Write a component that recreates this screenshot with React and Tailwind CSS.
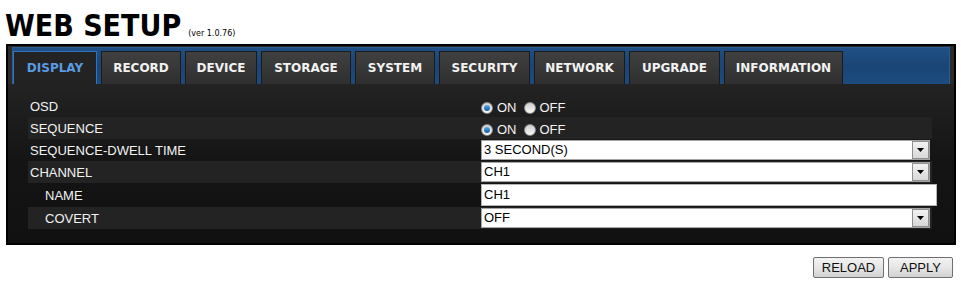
import React from "react";

const tabs = [
  ["DISPLAY", "w-[84px]"],
  ["RECORD", "w-[80px]"],
  ["DEVICE", "w-[72px]"],
  ["STORAGE", "w-[90px]"],
  ["SYSTEM", "w-[80px]"],
  ["SECURITY", "w-[91px]"],
  ["NETWORK", "w-[91px]"],
  ["UPGRADE", "w-[91px]"],
  ["INFORMATION", "w-[119px]"],
];

function Radio({ checked }) {
  return (
    <span className="relative inline-flex w-[12px] h-[12px] rounded-full border border-[#8a8a8a] bg-gradient-to-b from-[#cfcfcf] to-[#f8f8f8] items-center justify-center">
      {checked && <span className="w-[6px] h-[6px] rounded-full bg-gradient-to-b from-[#5aa8e8] to-[#0d5a9e]" />}
    </span>
  );
}

function RadioPair() {
  return (
    <div className="flex items-center h-full pt-[3px] text-[13px] text-[#f4f4f4]">
      <Radio checked />
      <span className="ml-[4px]">ON</span>
      <span className="ml-[7px] flex"><Radio /></span>
      <span className="ml-[4px]">OFF</span>
    </div>
  );
}

function Select({ value }) {
  return (
    <div className="w-[449px] h-[20px] shrink-0 bg-white border border-[#a5a5a5] flex items-center justify-between text-[13px] text-black">
      <span className="pl-[2px]">{value}</span>
      <span className="w-[17px] h-[18px] border border-[#8f8f8f] bg-gradient-to-b from-[#f2f2f2] to-[#d8d8d8] flex items-center justify-center">
        <svg width="7" height="4" viewBox="0 0 7 4"><path d="M0 0H7L3.5 4Z" fill="#000" /></svg>
      </span>
    </div>
  );
}

function Row({ label, indent, shaded, tall, children }) {
  return (
    <div className={`flex ${tall ? "h-[24px]" : "h-[22px]"} items-center ${shaded ? "bg-[#232323]" : ""}`}>
      <div className={`w-[453px] shrink-0 pt-[1px] text-[13px] text-[#f2f2f2] ${indent ? "pl-[17px]" : "pl-[2px]"}`}>{label}</div>
      <div className="flex-1 h-full flex items-center">{children}</div>
    </div>
  );
}

export default function App() {
  return (
    <div className="w-[961px] h-[287px] bg-white" style={{ fontFamily: '"Liberation Sans", Arial, sans-serif' }}>
      <div className="flex items-baseline pl-[5px] pt-[8px] h-[44px]">
        <span className="text-[30px] leading-[36px] font-bold text-black" style={{ fontFamily: '"DejaVu Sans Condensed", "DejaVu Sans", sans-serif', fontStretch: "condensed" }}>WEB SETUP</span>
        <span className="ml-[7px] text-[8px] text-black" style={{ fontFamily: '"DejaVu Sans", sans-serif' }}>(ver 1.0.76)</span>
      </div>
      <div className="mx-[6px] w-[950px] border-2 border-black bg-[#2a2a2a]">
        <div className="px-[4px] pt-[1px]">
          <div className="h-[37px] border border-b-0 border-[#2c5d92] bg-gradient-to-b from-[#1f5084] via-[#1a4575] to-[#1d4b7e] flex items-end gap-[4px]" style={{ fontFamily: '"DejaVu Sans", sans-serif' }}>
            {tabs.map(([t, w], i) => (
              <div
                key={t}
                className={
                  i === 0
                    ? `${w} h-[33px] flex items-center justify-center border border-b-0 border-[#2f74c0] bg-[#232323] text-[12px] font-bold text-[#5b9be3]`
                    : `${w} h-[33px] flex items-center justify-center border border-b-0 border-[#1a1a1a] bg-gradient-to-b from-[#404040] to-[#2f2f2f] text-[12px] font-bold text-[#f2f2f2]`
                }
              >
                {t}
              </div>
            ))}
          </div>
        </div>
        <div className="bg-gradient-to-b from-[#232323] via-[#141414] to-[#111111] pt-[11px] pb-[14px] pl-[20px] pr-[22px]">
          <Row label="OSD"><RadioPair /></Row>
          <Row label="SEQUENCE" shaded><RadioPair /></Row>
          <Row label="SEQUENCE-DWELL TIME"><Select value="3 SECOND(S)" /></Row>
          <Row label="CHANNEL" shaded><Select value="CH1" /></Row>
          <Row label="NAME" indent tall>
            <div className="w-[456px] h-[22px] bg-white border border-[#b5b5b5] flex items-center text-[13px] text-black pl-[2px] shrink-0">CH1</div>
          </Row>
          <Row label="COVERT" indent shaded><Select value="OFF" /></Row>
        </div>
      </div>
      <div className="flex justify-end gap-[4px] pr-[8px] mt-[12px]">
        <button className="w-[71px] h-[21px] border border-[#707070] rounded-[2px] bg-gradient-to-b from-[#f3f3f3] via-[#e6e6e6] to-[#d2d2d2] text-[13px] text-[#111]">RELOAD</button>
        <button className="w-[65px] h-[21px] border border-[#707070] rounded-[2px] bg-gradient-to-b from-[#f3f3f3] via-[#e6e6e6] to-[#d2d2d2] text-[13px] text-[#111]">APPLY</button>
      </div>
    </div>
  );
}
